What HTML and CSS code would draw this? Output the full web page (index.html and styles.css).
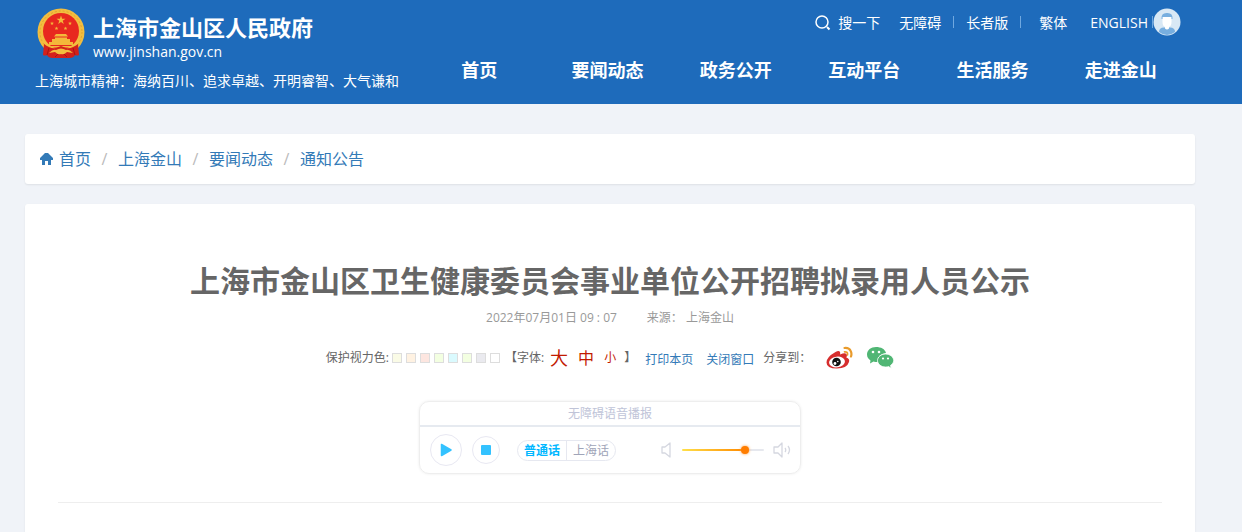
FILE: index.html
```
<!DOCTYPE html>
<html lang="zh-CN">
<head>
    <meta charset="UTF-8">
    <meta name="viewport" content="width=device-width, initial-scale=1.0">
    <title>上海市金山区卫生健康委员会事业单位公开招聘拟录用人员公示</title>
    <link rel="stylesheet" href="styles.css">
</head>
<body>
    <header class="header">
        <div class="brand">
            <a class="logo" href="#">
                <svg class="emblem" viewBox="0 0 48 52" aria-hidden="true">
                    <circle cx="24" cy="24" r="23.5" fill="#f2bd3f"/>
                    <circle cx="24" cy="24" r="21" fill="none" stroke="#e3a22f" stroke-width="1" stroke-dasharray="2 2"/>
                    <circle cx="24" cy="23" r="18" fill="#e8281f"/>
                    <path d="M24 7.500l1.100 3.300h3.400l-2.800 2 1.100 3.300-2.800-2-2.800 2 1.100-3.300-2.800-2h3.400z" fill="#f4b83a"/>
                    <g fill="#f4b83a">
                        <path id="star" d="M15 13.500l.5 1.300h1.400l-1.100.9.4 1.400-1.200-.8-1.200.8.4-1.400-1.100-.9h1.400z"/>
                        <use href="#star" x="18"/>
                        <use href="#star" x="4.500" y="5"/>
                        <use href="#star" x="13.500" y="5"/>
                        <path d="M19 26h10l2 2.500H17zM18 29.500h12v1.500H18zM15 31h18v3H15zM12 34h24v3H12z"/>
                        <path d="M9 38h30v1.500H9z"/>
                    </g>
                    <path d="M7 36q6 5 12 4l5-2 5 2q6 1 12-4l1 11q-2 1-4 0-1 3-6 3H16q-5 0-6-3-2 1-4 0z" fill="#d3201b"/>
                    <path d="M12 45q4-4 7-3 5-3 10 0 3-1 7 3l-6-1q-3 3-6 2-3 1-6-2z" fill="#f2bd3f"/>
                    <path d="M12 40l-2 7M36 40l2 7" stroke="#a81512"/>
                    <path d="M18 49l3-3M30 49l-3-3" stroke="#a81512"/>
                </svg>
                <span class="logo-text">
                    <strong>上海市金山区人民政府</strong>
                    <span>www.jinshan.gov.cn</span>
                </span>
            </a>
            <p class="slogan">上海城市精神：海纳百川、追求卓越、开明睿智、大气谦和</p>
        </div>

        <div class="header-right">
            <div class="tools">
                <a class="search" href="#">
                    <svg width="16" height="16" viewBox="0 0 16 16" aria-hidden="true">
                        <circle cx="7" cy="7" r="6" fill="none" stroke="#fff" stroke-width="1.500"/>
                        <path d="M12 12l2.500 2.500" stroke="#fff" stroke-width="2"/>
                    </svg>
                    搜一下
                </a>
                <a href="#">无障碍</a>
                <span class="bar"></span>
                <a href="#">长者版</a>
                <span class="bar"></span>
                <a class="trad" href="#">繁体</a>
                <a class="english" href="#">ENGLISH</a>
                <span class="bar last"></span>
                <a class="avatar" href="#" aria-label="用户中心">
                    <svg width="28" height="28" viewBox="0 0 28 28">
                        <circle cx="14" cy="14" r="13.500" fill="#d8e8f5"/>
                        <path d="M6 24q0-4.500 5-4.500h6q5 0 5 4.500-8 6-16 0z" fill="#77aedf"/>
                        <path d="M9.500 9h9v5q0 4-2.500 5v1.500q-2 2-4 0V19q-2.500-1-2.500-5z" fill="#fff"/>
                        <path d="M8.500 11q-.5-6 5-6h1q5.500 0 5 6h-1V9h-9v2z" fill="#77aedf"/>
                    </svg>
                </a>
            </div>
            <nav class="nav">
                <a href="#">首页</a>
                <a href="#">要闻动态</a>
                <a href="#">政务公开</a>
                <a href="#">互动平台</a>
                <a href="#">生活服务</a>
                <a href="#">走进金山</a>
            </nav>
        </div>
    </header>

    <main class="container">
        <nav class="panel breadcrumb" aria-label="当前位置">
            <svg width="13" height="12" viewBox="0 0 13 12" aria-hidden="true">
                <path d="M5 0h3l5 5v2h-2v5H8V8H5v4H2V7H0V5z" fill="#337ab7"/>
            </svg>
            <a href="#">首页</a>
            <span class="slash">/</span>
            <a href="#">上海金山</a>
            <span class="slash">/</span>
            <a href="#">要闻动态</a>
            <span class="slash">/</span>
            <a href="#">通知公告</a>
        </nav>

        <article class="panel article">
            <h1>上海市金山区卫生健康委员会事业单位公开招聘拟录用人员公示</h1>
            <p class="meta"><span>2022年07月01日 09 : 07</span><span>来源： 上海金山</span></p>

            <div class="options">
                <span>保护视力色:</span>
                <span class="swatches">
                    <button class="swatch yellow" aria-label="浅黄"></button>
                    <button class="swatch orange" aria-label="浅橙"></button>
                    <button class="swatch red" aria-label="浅红"></button>
                    <button class="swatch green" aria-label="浅绿"></button>
                    <button class="swatch cyan" aria-label="浅蓝"></button>
                    <button class="swatch green" aria-label="草绿"></button>
                    <button class="swatch gray" aria-label="浅灰"></button>
                    <button class="swatch" aria-label="白色"></button>
                </span>
                <span class="sizes">
                    <span>【字体:</span>
                    <button class="large">大</button>
                    <button class="medium">中</button>
                    <button class="small">小</button>
                    <span>】</span>
                </span>
                <a href="#">打印本页</a>
                <a class="close" href="#">关闭窗口</a>
                <span class="share">分享到：</span>
                <a class="icon" href="#" aria-label="微博">
                    <svg width="27" height="24" viewBox="0 0 27 24">
                        <path d="M9.500 6q3.500-2 4.500 0 .5 1 0 2.500 6.500-2.500 7 .5 0 1-.7 2.500 3.700 1 2.700 4.500-2 6.500-12 6.500Q.5 22.500.5 16.500.5 11 9.500 6z" fill="#d62e2e"/>
                        <ellipse cx="11" cy="16" rx="8" ry="5.300" fill="#fff" transform="rotate(-8 11 16)"/>
                        <circle cx="10.500" cy="16" r="4.300" fill="#111"/>
                        <circle cx="9" cy="17.500" r="1.400" fill="#fff"/>
                        <circle cx="11.800" cy="15.500" r=".8" fill="#fff"/>
                        <path d="M18.500 2q4.500-.5 6.200 3 1.300 2.500.3 5.500" fill="none" stroke="#e99b2c" stroke-width="2.200" stroke-linecap="round"/>
                        <path d="M18.500 5.800q3.500-.3 3 3.200" fill="none" stroke="#e99b2c" stroke-width="1.700" stroke-linecap="round"/>
                    </svg>
                </a>
                <a class="icon" href="#" aria-label="微信">
                    <svg width="27" height="24" viewBox="0 0 27 24">
                        <path d="M9 1C4 1 0 4 0 8.500c0 3 1.500 4.500 3.500 6L3 17.500l3.500-2q1.500.5 4 .5 0-8 8.500-9C18 3 14 1 9 1z" fill="#50b674"/>
                        <path d="M18.500 8c-4.500 0-8 3-8 6.500s3.500 6.500 8 6.500q2 0 3-.5l2.800 1.800-.8-2.800c2-1.500 3.200-3 3.200-5C26.700 11 23 8 18.500 8z" fill="#50b674" stroke="#fff" stroke-width=".8"/>
                        <g fill="#fff">
                            <circle cx="6" cy="6" r="1.300"/>
                            <circle cx="12" cy="6" r="1.300"/>
                            <circle cx="16" cy="12.500" r="1.100"/>
                            <circle cx="21" cy="12.500" r="1.100"/>
                        </g>
                    </svg>
                </a>
            </div>

            <section class="player">
                <div class="player-title">无障碍语音播报</div>
                <div class="player-controls">
                    <button class="round play" aria-label="播放">
                        <svg width="12" height="14" viewBox="0 0 12 14"><path d="M1.500 1.500v11L11 7z" fill="#33c2ff" stroke="#33c2ff" stroke-width="1.500" stroke-linejoin="round"/></svg>
                    </button>
                    <button class="round stop" aria-label="停止">
                        <svg width="10" height="10" viewBox="0 0 10 10"><rect width="10" height="10" rx="1" fill="#33c2ff"/></svg>
                    </button>
                    <div class="voice">
                        <button class="active">普通话</button>
                        <button>上海话</button>
                    </div>
                    <svg class="speaker" width="12" height="16" viewBox="0 0 12 16" aria-hidden="true">
                        <path d="M10 1v14l-5-4H2V5h3z" fill="none" stroke="#d5d7e0" stroke-linejoin="round" stroke-width="1.300"/>
                    </svg>
                    <input class="volume" type="range" min="0" max="100" value="80" aria-label="音量">
                    <svg width="18" height="16" viewBox="0 0 18 16" aria-hidden="true">
                        <path d="M9 1v14l-4-4H1V5h4zM12 6q1.500 2 0 4M15 4q3 4 0 8" fill="none" stroke="#d5d7e0" stroke-linejoin="round" stroke-width="1.300"/>
                    </svg>
                </div>
            </section>
            <hr>
        </article>
    </main>
</body>
</html>
```
FILE: styles.css
```
* {
    box-sizing: border-box;
}
body {
    margin: 0;
    background: #f0f3f8;
    color: #666;
    font: 12px/18px "Open Sans", "Noto Sans CJK SC", sans-serif;
}
a {
    color: #337ab7;
    text-decoration: none;
}
button {
    padding: 0;
    border: 0;
    background: none;
    font: inherit;
    cursor: pointer;
}
svg {
    display: block;
    flex: none;
}

/* header */
.header {
    display: flex;
    justify-content: space-between;
    height: 104px;
    padding: 8px 57px 0 35px;
    background: #1e6bbb;
    color: #fff;
}
.header a {
    color: #fff;
}
.logo {
    display: flex;
    gap: 8px;
    padding-left: 2px;
}
.emblem {
    width: 48px;
    height: 52px;
}
.logo-text {
    display: flex;
    flex-direction: column;
    padding-top: 4px;
    font-size: 14px;
    line-height: 20px;
}
.logo-text strong {
    font-size: 22px;
    line-height: 30px;
}
.slogan {
    margin: 8px 0 0;
    font-size: 14px;
    line-height: 22px;
}
.header-right {
    width: 770px;
}
.tools {
    display: flex;
    align-items: center;
    justify-content: flex-end;
    height: 28px;
    padding-right: 4px;
    font-size: 14px;
    line-height: 20px;
}
.tools a {
    padding-top: 2px;
}
.search {
    display: flex;
    align-items: center;
    gap: 7px;
    margin-right: 19px;
}
.bar {
    width: 1px;
    height: 12px;
    margin: 0 12px;
    background: #6fa8e0;
}
.bar.last {
    margin: 0 0 0 4px;
}
.trad {
    margin: 0 23px 0 6px;
}
.tools .avatar {
    padding: 0;
}
.nav {
    display: grid;
    grid-template-columns: repeat(6, 1fr);
    margin-top: 20px;
    font-size: 18px;
    font-weight: bold;
    line-height: 28px;
    text-align: center;
}

/* content */
.container {
    padding: 30px 47px 0 25px;
}
.panel {
    border-radius: 3px;
    background: #fff;
    box-shadow: 0 1px 2px rgba(0, 0, 0, 0.08);
}
.breadcrumb {
    display: flex;
    align-items: center;
    height: 50px;
    margin-bottom: 20px;
    padding: 0 15px;
    font-size: 16px;
    line-height: 24px;
}
.breadcrumb svg {
    margin-right: 6px;
}
.slash {
    width: 27px;
    color: #bbb;
    text-align: center;
}
.article {
    padding: 56px 33px 40px;
}
h1 {
    margin: 0;
    font-size: 30px;
    line-height: 42px;
    text-align: center;
}
.meta {
    display: flex;
    justify-content: center;
    gap: 30px;
    margin: 7px 0 0;
    color: #999;
}
.options {
    display: flex;
    align-items: center;
    justify-content: center;
    height: 30px;
    margin-top: 16px;
}
.options > a:not(.icon) {
    padding-top: 4px;
}
.swatches {
    display: flex;
    gap: 4px;
    margin-left: 3px;
}
.swatch {
    width: 10px;
    height: 10px;
    border: 1px solid #ddd;
    background: #fff;
}
.yellow { background: #fafbe6; }
.orange { background: #fff2e2; }
.red { background: #fde6e0; }
.green { background: #f3ffe1; }
.cyan { background: #dafafe; }
.gray { background: #eaeaef; }
.sizes {
    display: flex;
    align-items: center;
    margin: 0 9px 0 5px;
}
.sizes button {
    color: #c21a00;
}
.large {
    margin: 0 10px 0 6px;
    font-size: 18px;
}
.medium {
    font-size: 16px;
}
.small {
    margin: 0 8px 0 10px;
}
.close {
    margin: 0 9px 0 13px;
}
.share {
    margin-right: 15px;
}
.icon + .icon {
    margin-left: 14px;
}

/* voice player */
.player {
    width: 382px;
    margin: 28px auto;
    border: 1px solid #eee;
    border-radius: 10px;
    box-shadow: 0 0 3px rgba(0, 0, 0, 0.08);
}
.player-title {
    height: 25px;
    border-bottom: 2px solid #e6eaf0;
    color: #c0c4d8;
    line-height: 23px;
    text-align: center;
}
.player-controls {
    display: flex;
    align-items: center;
    height: 46px;
    padding: 0 9px 0 10px;
}
.round {
    display: flex;
    flex: none;
    align-items: center;
    justify-content: center;
    border: 1px solid #e8e8f2;
    border-radius: 50%;
}
.play {
    width: 32px;
    height: 32px;
    margin-right: 10px;
}
.stop {
    width: 28px;
    height: 28px;
    margin-right: 17px;
}
.voice {
    display: flex;
    flex: none;
    width: 99px;
    height: 21px;
    border: 1px solid #e6e8f0;
    border-radius: 11px;
}
.voice button {
    flex: 1;
    color: #a0a4b8;
    line-height: 19px;
}
.voice .active {
    border-right: 1px solid #e6e8f0;
    color: #00b7ff;
    font-weight: bold;
}
.speaker {
    margin: 0 10px 0 44px;
}
.volume {
    flex: none;
    width: 82px;
    height: 12px;
    margin: 0 9px 0 0;
    appearance: none;
    background: none;
}
.volume::-webkit-slider-runnable-track {
    height: 2px;
    border-radius: 1px;
    background: linear-gradient(to right, #ffe04a, #ff8a00 77%, #e6e8ee 77%);
}
.volume::-webkit-slider-thumb {
    width: 8px;
    height: 8px;
    margin-top: -3px;
    appearance: none;
    border-radius: 50%;
    background: #ff7d00;
    box-shadow: 0 0 3px #ff9c40;
}
hr {
    margin: 0;
    border: 0;
    border-top: 1px solid #eee;
}
```
